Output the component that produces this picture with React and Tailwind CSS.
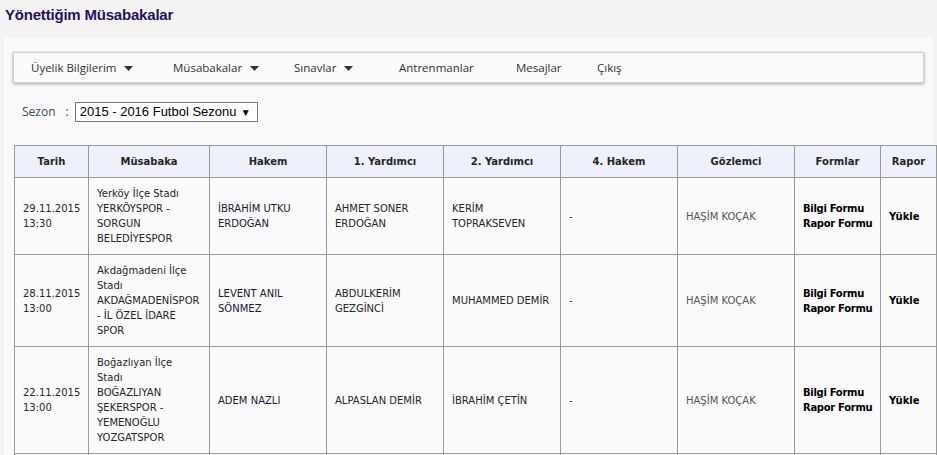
import React from 'react';

const rows = [
  {
    date: '29.11.2015', time: '13:30',
    match: ['Yerköy İlçe Stadı', 'YERKÖYSPOR -', 'SORGUN', 'BELEDİYESPOR'],
    hakem: ['İBRAHİM UTKU', 'ERDOĞAN'],
    y1: ['AHMET SONER', 'ERDOĞAN'],
    y2: ['KERİM', 'TOPRAKSEVEN'],
  },
  {
    date: '28.11.2015', time: '13:00',
    match: ['Akdağmadeni İlçe', 'Stadı', 'AKDAĞMADENİSPOR', '- İL ÖZEL İDARE', 'SPOR'],
    hakem: ['LEVENT ANIL', 'SÖNMEZ'],
    y1: ['ABDULKERİM', 'GEZGİNCİ'],
    y2: ['MUHAMMED DEMİR'],
  },
  {
    date: '22.11.2015', time: '13:00',
    match: ['Boğazlıyan İlçe', 'Stadı', 'BOĞAZLIYAN', 'ŞEKERSPOR -', 'YEMENOĞLU', 'YOZGATSPOR'],
    hakem: ['ADEM NAZLI'],
    y1: ['ALPASLAN DEMİR'],
    y2: ['İBRAHİM ÇETİN'],
  },
];

const menu = [
  { label: 'Üyelik Bilgilerim', caret: true, w: 'w-[142px]' },
  { label: 'Müsabakalar', caret: true, w: 'w-[121px]' },
  { label: 'Sınavlar', caret: true, w: 'w-[105px]' },
  { label: 'Antrenmanlar', caret: false, w: 'w-[117px]' },
  { label: 'Mesajlar', caret: false, w: 'w-[81px]' },
  { label: 'Çıkış', caret: false, w: 'w-[60px]' },
];

function Caret() {
  return (
    <svg width="9" height="5" viewBox="0 0 9 5" className="ml-[8px] mt-[1px]">
      <path d="M0 0 L9 0 L4.5 5 Z" fill="#333" />
    </svg>
  );
}

function Lines({ items }) {
  return items.map((t, i) => <div key={i}>{t}</div>);
}

export default function App() {
  const th = 'border border-[#999] bg-[#eef0fb] font-bold text-center px-2 py-[8px] whitespace-nowrap';
  const td = 'border border-[#999] px-[8px] py-[8px] align-middle text-left';

  return (
    <div className="w-[937px] h-[455px] overflow-hidden bg-[#f3f3f3] font-['Liberation_Sans',Arial,sans-serif]">
      {/* Title */}
      <div className="h-[37px] pl-[5px] pt-[4px] text-[15px] tracking-[-0.2px] font-bold text-[#2a0f5e]">
        Yönettiğim Müsabakalar
      </div>

      <div className="ml-[4px] w-[929px] bg-[#f9f9f9] pt-[15px] pl-[9px] pb-10">
        {/* Navigation */}
        <div className="w-[911px] h-[31px] bg-[#fafafa] border border-[#d0d0d0] shadow-[0_1px_3px_rgba(0,0,0,0.35)] flex items-center pl-[17px] font-['Open_Sans',sans-serif] text-[11.5px] text-[#333]">
          {menu.map((m) => (
            <div key={m.label} className={`${m.w} flex items-center`}>
              <span>{m.label}</span>
              {m.caret && <Caret />}
            </div>
          ))}
        </div>

        {/* Season selector */}
        <div className="flex items-center mt-[18px] ml-[9px] h-[22px]">
          <span className="font-['Open_Sans',sans-serif] text-[12px] text-[#3b4a6b]">Sezon</span>
          <span className="font-['Open_Sans',sans-serif] text-[12px] text-[#3b4a6b] ml-[10px]">:</span>
          <div className="ml-[6px] w-[183px] h-[20px] bg-white border border-[#777] flex items-center justify-between pl-[4px] pr-[6px] text-[13px] text-black">
            <span>2015 - 2016 Futbol Sezonu</span>
            <span className="text-[10px]">▼</span>
          </div>
        </div>

        {/* Matches table */}
        <table className="mt-[22px] ml-[1px] border-collapse font-['DejaVu_Sans',Verdana,sans-serif] text-[10px] leading-[15px] text-[#262626] table-fixed w-[922px]">
          <colgroup>
            <col className="w-[74px]" />
            <col className="w-[121px]" />
            <col className="w-[117px]" />
            <col className="w-[117px]" />
            <col className="w-[117px]" />
            <col className="w-[117px]" />
            <col className="w-[117px]" />
            <col className="w-[86px]" />
            <col className="w-[56px]" />
          </colgroup>
          <thead>
            <tr>
              <th className={th}>Tarih</th>
              <th className={th}>Müsabaka</th>
              <th className={th}>Hakem</th>
              <th className={th}>1. Yardımcı</th>
              <th className={th}>2. Yardımcı</th>
              <th className={th}>4. Hakem</th>
              <th className={th}>Gözlemci</th>
              <th className={th}>Formlar</th>
              <th className={th}>Rapor</th>
            </tr>
          </thead>
          <tbody className="bg-[#fafafa]">
            {rows.map((r, i) => (
              <tr key={i}>
                <td className={td}>
                  <div>{r.date}</div>
                  <div>{r.time}</div>
                </td>
                <td className={td}><Lines items={r.match} /></td>
                <td className={`${td} text-[#221833]`}><Lines items={r.hakem} /></td>
                <td className={td}><Lines items={r.y1} /></td>
                <td className={td}><Lines items={r.y2} /></td>
                <td className={td}>-</td>
                <td className={`${td} text-[#555]`}>HAŞİM KOÇAK</td>
                <td className={`${td} font-bold text-black whitespace-nowrap tracking-[-0.3px]`}>
                  <div>Bilgi Formu</div>
                  <div>Rapor Formu</div>
                </td>
                <td className={`${td} font-bold text-black whitespace-nowrap`}>Yükle</td>
              </tr>
            ))}
            {/* next row, starts at the bottom edge */}
            <tr className="h-[60px]">
              {Array.from({ length: 9 }).map((_, i) => (
                <td key={i} className={td}></td>
              ))}
            </tr>
          </tbody>
        </table>
      </div>
    </div>
  );
}
